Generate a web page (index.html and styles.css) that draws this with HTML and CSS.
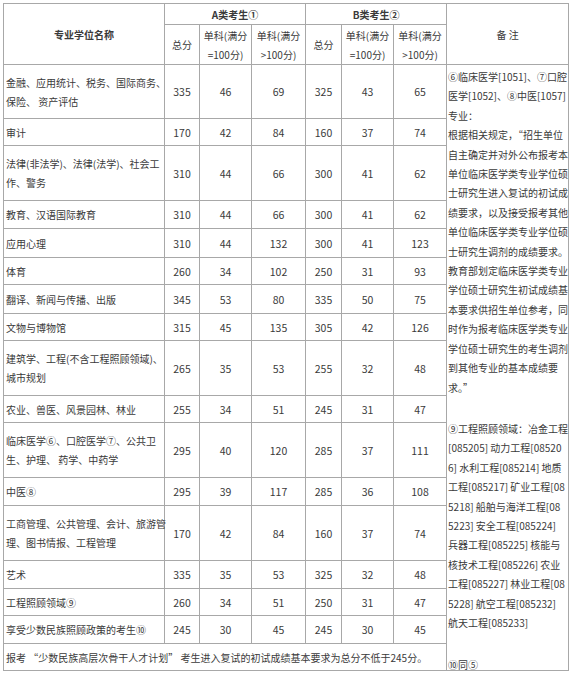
FILE: index.html
```html
<!DOCTYPE html>
<html lang="zh-CN">
<head>
<meta charset="utf-8">
<title>专业学位复试基本分数线</title>
<link rel="stylesheet" href="styles.css">
</head>
<body>
<table class="score">
  <colgroup>
    <col class="c-name"><col class="c-a1"><col class="c-a2"><col class="c-a3">
    <col class="c-b1"><col class="c-b2"><col class="c-b3"><col class="c-note">
  </colgroup>
  <tr class="h1">
    <th rowspan="2" class="bold">专业学位名称</th>
    <th colspan="3" class="bold">A类考生①</th>
    <th colspan="3" class="bold">B类考生②</th>
    <th rowspan="2" class="plain">备 注</th>
  </tr>
  <tr class="h2">
    <th class="plain">总分</th>
    <th class="plain">单科(满分<br>=100分)</th>
    <th class="plain">单科(满分<br>&gt;100分)</th>
    <th class="plain">总分</th>
    <th class="plain">单科(满分<br>=100分)</th>
    <th class="plain">单科(满分<br>&gt;100分)</th>
  </tr>
  <tr class="r54">
    <td class="name">金融、应用统计、税务、国际商务、<br>保险、 资产评估</td>
    <td>335</td><td>46</td><td>69</td><td>325</td><td>43</td><td>65</td>
    <td rowspan="17" class="note">
      <div class="nb1">⑥临床医学[1051]、⑦口腔<br>医学[1052]、⑧中医[1057]<br>专业：<br>根据相关规定，“招生单位<br>自主确定并对外公布报考本<br>单位临床医学类专业学位硕<br>士研究生进入复试的初试成<br>绩要求，以及接受报考其他<br>单位临床医学类专业学位硕<br>士研究生调剂的成绩要求。<br>教育部划定临床医学类专业<br>学位硕士研究生初试成绩基<br>本要求供招生单位参考，同<br>时作为报考临床医学类专业<br>学位硕士研究生的考生调剂<br>到其他专业的基本成绩要<br>求。”</div>
      <div class="nb2">⑨工程照顾领域：冶金工程<br>[085205] 动力工程[08520<br>6] 水利工程[085214] 地质<br>工程[085217] 矿业工程[08<br>5218] 船舶与海洋工程[08<br>5223] 安全工程[085224]<br>兵器工程[085225] 核能与<br>核技术工程[085226] 农业<br>工程[085227] 林业工程[08<br>5228] 航空工程[085232]<br>航天工程[085233]</div>
      <div class="nb3">⑩同⑤</div>
    </td>
  </tr>
  <tr class="r27"><td class="name">审计</td><td>170</td><td>42</td><td>84</td><td>160</td><td>37</td><td>74</td></tr>
  <tr class="r55"><td class="name">法律(非法学)、法律(法学)、社会工<br>作、警务</td><td>310</td><td>44</td><td>66</td><td>300</td><td>41</td><td>62</td></tr>
  <tr class="r28"><td class="name">教育、汉语国际教育</td><td>310</td><td>44</td><td>66</td><td>300</td><td>41</td><td>62</td></tr>
  <tr class="r29"><td class="name">应用心理</td><td>310</td><td>44</td><td>132</td><td>300</td><td>41</td><td>123</td></tr>
  <tr class="r27"><td class="name">体育</td><td>260</td><td>34</td><td>102</td><td>250</td><td>31</td><td>93</td></tr>
  <tr class="r29"><td class="name">翻译、新闻与传播、出版</td><td>345</td><td>53</td><td>80</td><td>335</td><td>50</td><td>75</td></tr>
  <tr class="r27"><td class="name">文物与博物馆</td><td>315</td><td>45</td><td>135</td><td>305</td><td>42</td><td>126</td></tr>
  <tr class="r55"><td class="name">建筑学、工程(不含工程照顾领域)、<br>城市规划</td><td>265</td><td>35</td><td>53</td><td>255</td><td>32</td><td>48</td></tr>
  <tr class="r27"><td class="name">农业、兽医、风景园林、林业</td><td>255</td><td>34</td><td>51</td><td>245</td><td>31</td><td>47</td></tr>
  <tr class="r55"><td class="name">临床医学⑥、口腔医学⑦、公共卫<br>生、护理、 药学、中药学</td><td>295</td><td>40</td><td>120</td><td>285</td><td>37</td><td>111</td></tr>
  <tr class="r28"><td class="name">中医⑧</td><td>295</td><td>39</td><td>117</td><td>285</td><td>36</td><td>108</td></tr>
  <tr class="r55"><td class="name">工商管理、公共管理、会计、旅游管<br>理、图书情报、工程管理</td><td>170</td><td>42</td><td>84</td><td>160</td><td>37</td><td>74</td></tr>
  <tr class="r28"><td class="name">艺术</td><td>335</td><td>35</td><td>53</td><td>325</td><td>32</td><td>48</td></tr>
  <tr class="r27"><td class="name">工程照顾领域⑨</td><td>260</td><td>34</td><td>51</td><td>250</td><td>31</td><td>47</td></tr>
  <tr class="r28"><td class="name">享受少数民族照顾政策的考生⑩</td><td>245</td><td>30</td><td>45</td><td>245</td><td>30</td><td>45</td></tr>
  <tr class="r27"><td colspan="7" class="name">报考 “少数民族高层次骨干人才计划” 考生进入复试的初试成绩基本要求为总分不低于245分。</td></tr>
</table>
</body>
</html>
```

FILE: styles.css
```css
html, body {
  margin: 0;
  padding: 0;
  background: #ffffff;
}
body {
  padding: 3px 0 0 3px;
  font-family: "Noto Sans CJK SC", "Noto Sans", sans-serif;
  color: #3a3a3a;
}
.score {
  border-collapse: collapse;
  table-layout: fixed;
  width: 565px;
  font-size: 10px;
}
.c-name { width: 161px; }
.c-a1 { width: 35px; }
.c-a2 { width: 52px; }
.c-a3 { width: 54px; }
.c-b1 { width: 36px; }
.c-b2 { width: 52px; }
.c-b3 { width: 53px; }
.c-note { width: 122px; }

.score th, .score td {
  border: 1px solid #a8a8a8;
  padding: 0;
  text-align: center;
  vertical-align: middle;
  line-height: 19px;
}
.score td { font-size: 10.5px; }
.score th.bold { font-weight: 700; }
.score th.plain { font-weight: 400; }
.score td.name {
  text-align: left;
  padding-left: 2px;
  font-size: 10px;
  white-space: nowrap;
}
.score td.note {
  text-align: left;
  vertical-align: top;
  font-size: 10px;
  line-height: 19.4px;
  white-space: nowrap;
  padding: 2px 0 0 1px;
}
.nb2 { margin-top: 22px; }
.nb3 { margin-top: 29px; line-height: 8px; }

.h1 { height: 21px; }
.h2 { height: 40px; }
.r27 { height: 27px; }
.r28 { height: 28px; }
.r29 { height: 29px; }
.r54 { height: 54px; }
.r55 { height: 55px; }
```
